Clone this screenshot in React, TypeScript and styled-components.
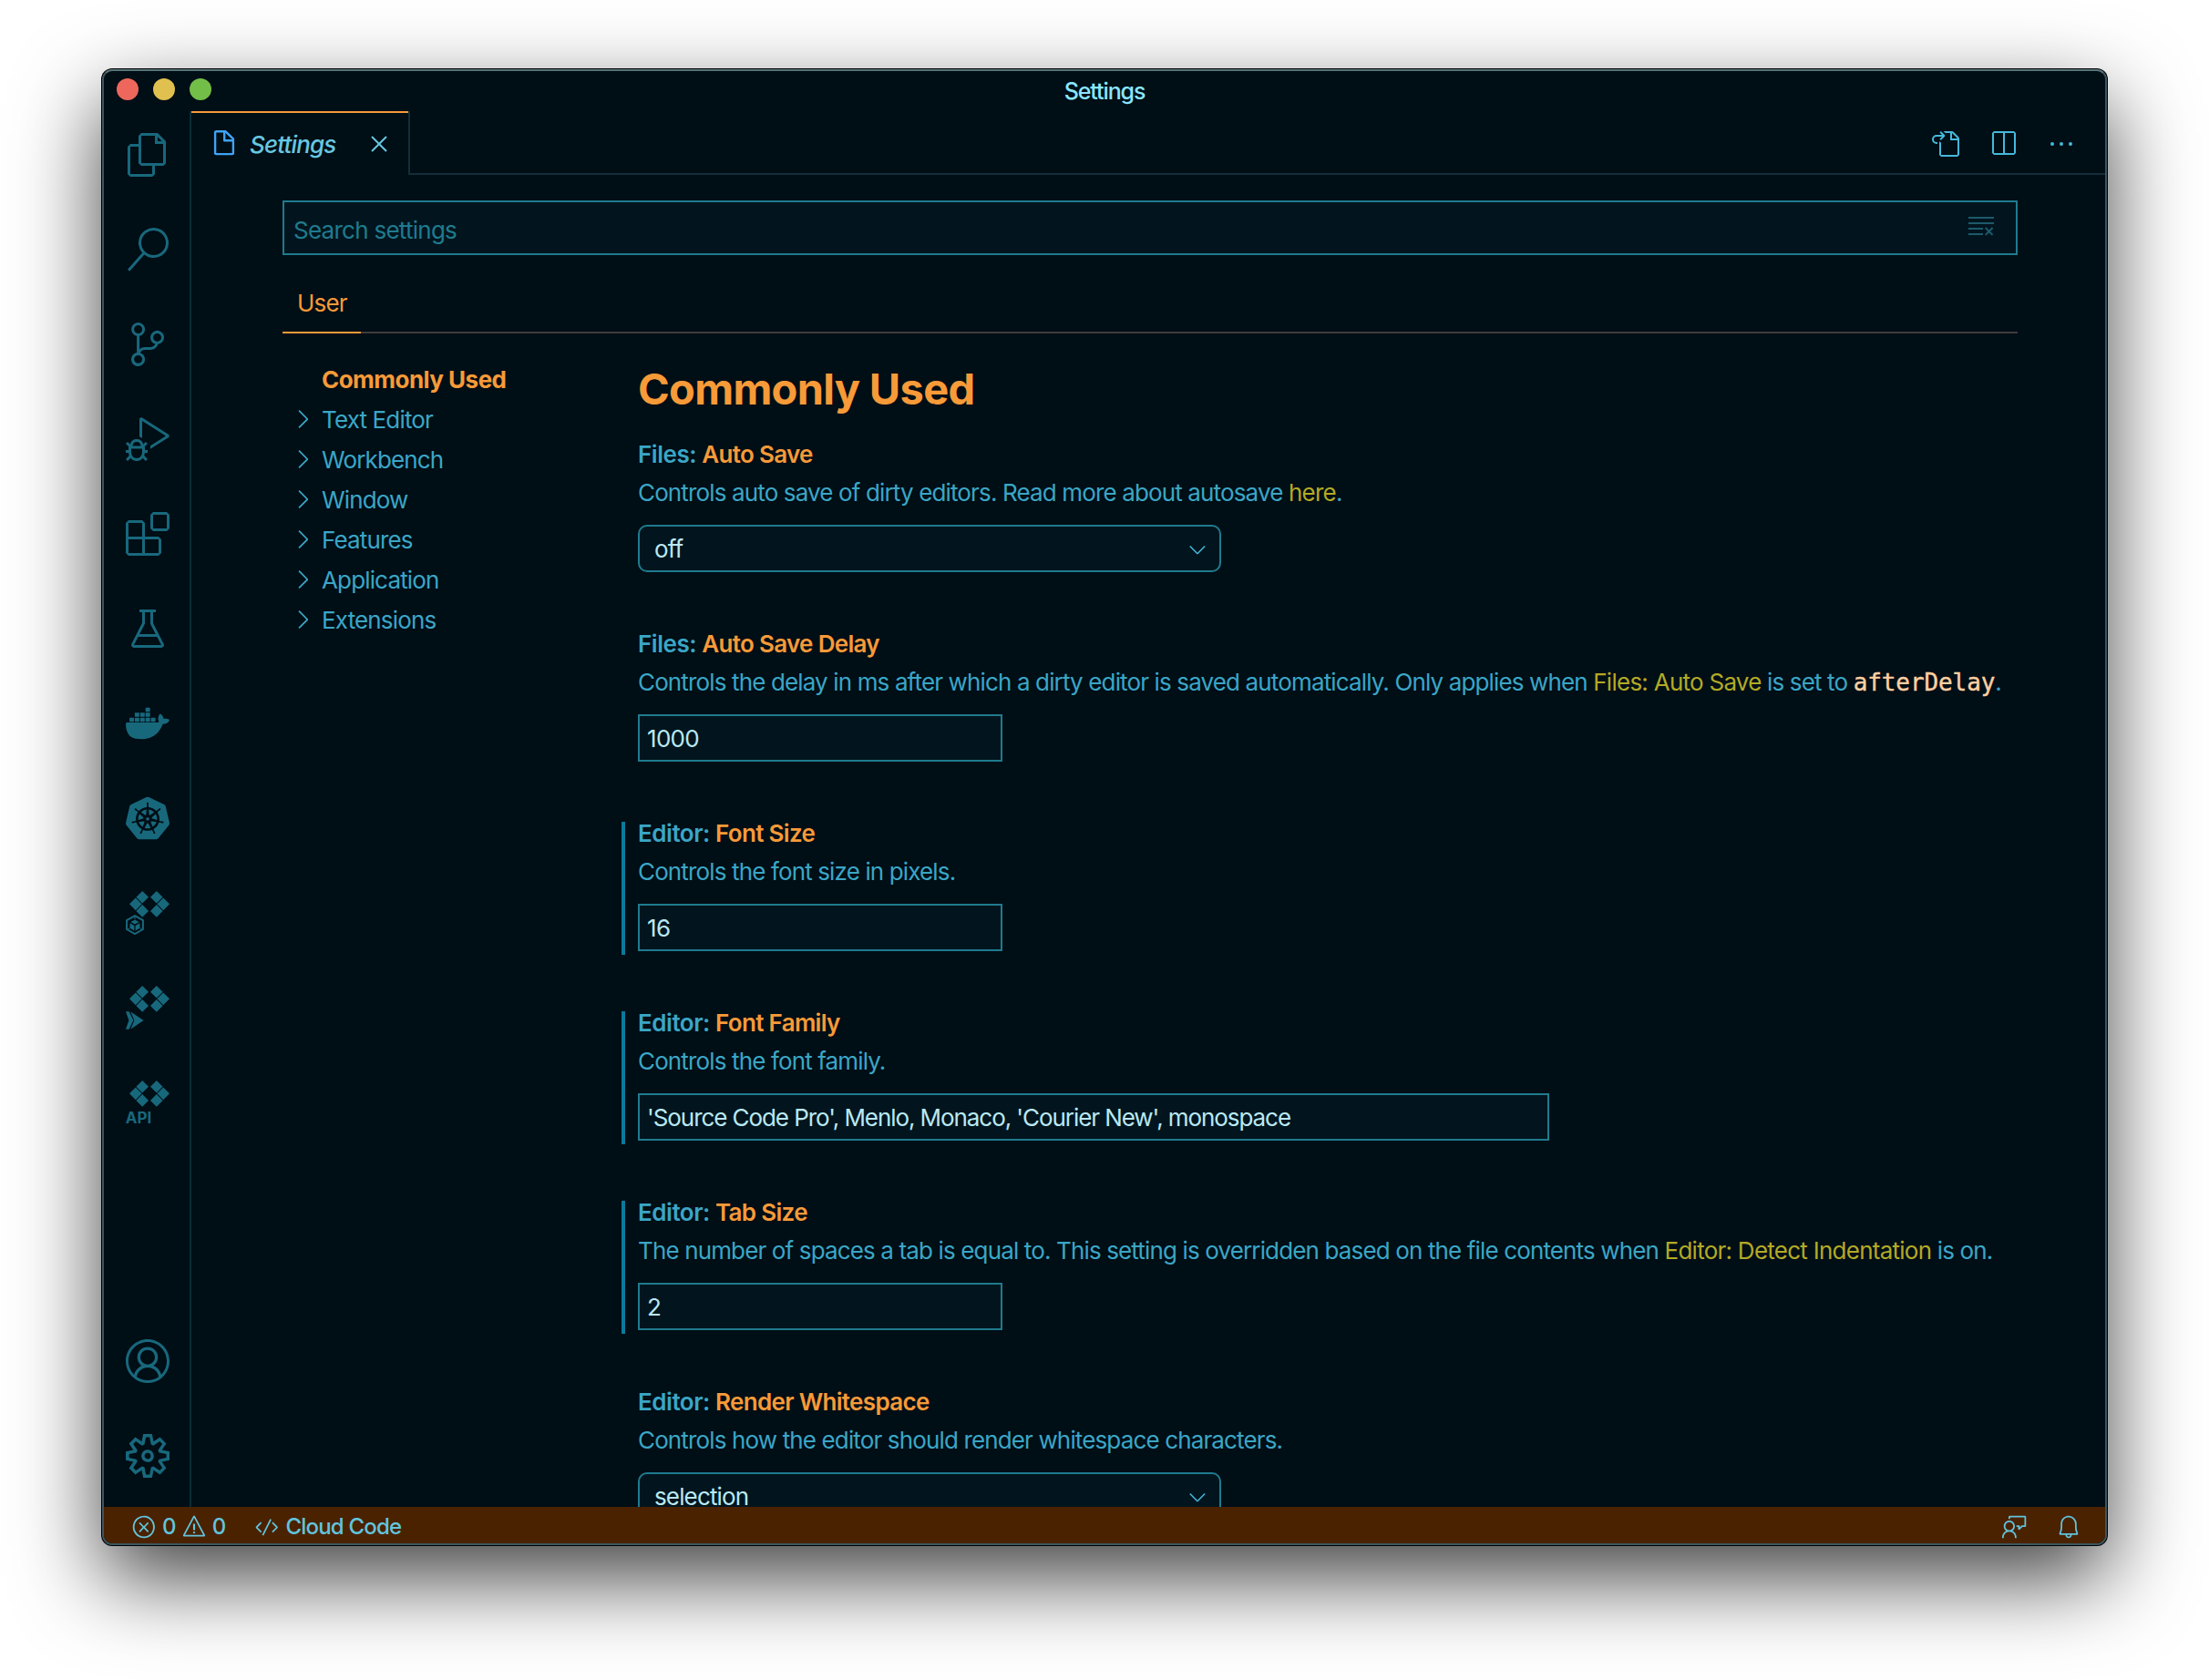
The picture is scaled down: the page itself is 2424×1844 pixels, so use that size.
import React from 'react';
import styled, { createGlobalStyle } from 'styled-components';
import {
  VscFiles, VscSearch, VscSourceControl, VscDebugAlt, VscExtensions, VscBeaker, VscAccount,
  VscSettingsGear, VscError, VscWarning, VscCode, VscFeedback, VscBell, VscGoToFile,
  VscSplitHorizontal, VscEllipsis, VscClearAll, VscClose, VscChevronRight, VscChevronDown,
} from 'react-icons/vsc';
import { SiDocker, SiKubernetes } from 'react-icons/si';

const color = {
  bg: '#000e16',
  field: '#02151e',
  fieldBorder: '#1f7b8e',
  line: '#122e39',
  sideLine: '#0c2c37',
  icon: '#18687c',
  text: '#3ba6c6',
  bright: '#b9e8f3',
  accent: '#f79a38',
  link: '#b3aa25',
  code: '#ffcfa0',
  action: '#45b9dc',
  status: '#4a2200',
  statusText: '#62c4de',
};

const GlobalStyle = createGlobalStyle`
  *, *::before, *::after { box-sizing: border-box; }
  body {
    margin: 0;
    background: #fff;
    color: ${color.text};
    font-family: Inter, "Liberation Sans", sans-serif;
    font-size: 26px;
    letter-spacing: -0.86px;
    -webkit-font-smoothing: antialiased;
  }
  svg { display: block; flex: none; overflow: visible; }
`;

const Desktop = styled.div`
  width: 2424px;
  height: 1844px;
  padding: 76px 112px 148px;
  overflow: hidden;
`;

const Window = styled.div`
  display: flex;
  flex-direction: column;
  height: 1620px;
  border: 2px solid #3c5660;
  border-top-color: #587579;
  border-radius: 11px;
  background: ${color.bg};
  box-shadow: 0 0 0 1px #000, 0 36px 94px rgba(0, 0, 0, 0.75);
  overflow: hidden;
`;

const TitleBar = styled.header`
  display: grid;
  grid-template-columns: 1fr auto 1fr;
  align-items: center;
  flex: none;
  height: 44px;
  padding: 0 14px;
`;

const Lights = styled.div`
  display: flex;
  gap: 16px;
  padding-bottom: 4px;
`;

const Light = styled.span<{ $fill: string }>`
  width: 24px;
  height: 24px;
  border-radius: 50%;
  background: ${p => p.$fill};
`;

const Title = styled.span`
  padding-bottom: 1px;
  color: #8ae6ff;
  font-size: 25px;
  font-weight: 500;
  letter-spacing: -1.1px;
`;

const Main = styled.div`
  display: flex;
  flex: 1;
  min-height: 0;
`;

const ActivityBar = styled.nav`
  display: flex;
  flex-direction: column;
  justify-content: space-between;
  flex: none;
  width: 96px;
  padding: 0 0 8px 2px;
  border-right: 2px solid ${color.sideLine};
  color: ${color.icon};
`;

const ActivityGroup = styled.div`
  display: flex;
  flex-direction: column;
  gap: 8px;
`;

const ActivityItem = styled.div`
  display: flex;
  align-items: center;
  justify-content: center;
  height: 96px;
`;

const Editor = styled.main`
  display: flex;
  flex-direction: column;
  flex: 1;
  min-width: 0;
`;

const TabStrip = styled.div`
  display: flex;
  flex: none;
  height: 70px;
`;

const Tab = styled.div`
  display: flex;
  align-items: center;
  width: 240px;
  padding: 0 18px 2px 23px;
  border-top: 2px solid ${color.accent};
  position: relative;
  &::after {
    content: '';
    position: absolute;
    top: -2px;
    right: 0;
    bottom: 0;
    width: 2px;
    background: ${color.line};
  }
`;

const TabLabel = styled.span`
  flex: 1;
  margin: 2px 0 0 15px;
  color: #67c7e0;
  font-style: italic;
  font-weight: 500;
  letter-spacing: -0.85px;
`;

const TabClose = styled.span`
  padding-top: 1px;
  color: #67c7e0;
`;

const TabActions = styled.div`
  display: flex;
  align-items: center;
  justify-content: flex-end;
  flex: 1;
  gap: 32px;
  padding: 4px 32px 0 0;
  border-bottom: 2px solid ${color.line};
  color: ${color.action};
`;

const Settings = styled.section`
  display: flex;
  flex-direction: column;
  flex: 1;
  min-height: 0;
  padding: 28px 96px 0 100px;
`;

const SearchBox = styled.div`
  display: flex;
  align-items: center;
  justify-content: space-between;
  flex: none;
  height: 60px;
  padding: 0 22px 0 10px;
  border: 2px solid ${color.fieldBorder};
  background: ${color.field};
  color: #1c5a6b;
`;

const Placeholder = styled.span`
  padding-top: 5px;
  color: ${color.fieldBorder};
  letter-spacing: -0.74px;
`;

const ClearIcon = styled.span`
  padding-bottom: 4px;
`;

const ScopeTabs = styled.div`
  display: flex;
  flex: none;
  height: 86px;
  align-items: flex-end;
  box-shadow: inset 0 -2px #403c3b;
`;

const ScopeTab = styled.div`
  width: 86px;
  height: 64px;
  padding-left: 16px;
  border-bottom: 2px solid ${color.accent};
  color: ${color.accent};
  line-height: 62px;
  letter-spacing: -0.8px;
`;

const Columns = styled.div`
  display: flex;
  flex: 1;
  min-height: 0;
`;

const Tree = styled.ul`
  flex: none;
  width: 372px;
  margin: 0;
  padding: 28px 0 0 6px;
  list-style: none;
`;

const TreeRow = styled.li<{ $active?: boolean }>`
  display: flex;
  align-items: center;
  height: 44px;
  gap: 5px;
  padding-left: ${p => (p.$active ? 37 : 0)}px;
  color: ${p => (p.$active ? color.accent : color.text)};
  font-weight: ${p => (p.$active ? 700 : 400)};
  letter-spacing: ${p => (p.$active ? -0.53 : -0.85)}px;
`;

const TreeChevron = styled.span``;

const SettingList = styled.div`
  flex: 1;
  min-width: 0;
  padding-top: 33px;
  overflow: hidden;
`;

const Heading = styled.h1`
  margin: 0 0 31px;
  padding-left: 18px;
  color: ${color.accent};
  font-size: 47px;
  font-weight: 700;
  line-height: 56px;
  letter-spacing: -0.7px;
`;

const Setting = styled.article<{ $modified?: boolean }>`
  height: 146px;
  margin-bottom: 62px;
  padding-left: 14px;
  border-left: 4px solid ${p => (p.$modified ? '#0a7a9c' : 'transparent')};
`;

const SettingTitle = styled.h2`
  margin: 0;
  font-size: 26px;
  font-weight: 600;
  line-height: 26px;
  letter-spacing: -0.46px;
  white-space: pre;
`;

const SettingName = styled.span`
  color: ${color.accent};
  letter-spacing: -0.68px;
`;

const Description = styled.p`
  margin: 0 0 7px;
  height: 57px;
  line-height: 57px;
  white-space: pre;
`;

const Link = styled.a`
  color: ${color.link};
  letter-spacing: -0.74px;
`;

const Code = styled.code`
  color: ${color.code};
  font: 26px/1 "DejaVu Sans Mono", monospace;
  letter-spacing: -0.1px;
  -webkit-text-stroke: 0.4px ${color.code};
`;

const TextField = styled.div<{ $width: number; $tight?: boolean }>`
  display: flex;
  align-items: center;
  width: ${p => p.$width}px;
  height: 52px;
  padding: 1px 8px 0;
  border: 2px solid ${color.fieldBorder};
  background: ${color.field};
  color: ${color.bright};
  letter-spacing: ${p => (p.$tight ? -1.07 : -0.7)}px;
  white-space: pre;
`;

const SelectField = styled.div`
  display: flex;
  align-items: center;
  justify-content: space-between;
  width: 640px;
  height: 52px;
  padding: 1px 10px 0 16px;
  border: 2px solid ${color.fieldBorder};
  border-radius: 10px;
  background: ${color.field};
  color: ${color.bright};
  svg { color: ${color.action}; }
`;

const StatusBar = styled.footer`
  display: flex;
  justify-content: space-between;
  flex: none;
  height: 40px;
  padding: 4px 26px 0 30px;
  background: ${color.status};
  color: ${color.statusText};
  font-size: 24px;
  font-weight: 500;
  letter-spacing: -0.8px;
`;

const StatusGroup = styled.div<{ $gap: number }>`
  display: flex;
  align-items: center;
  gap: ${p => p.$gap}px;
`;

const StatusItem = styled.div`
  display: flex;
  align-items: center;
  gap: 6px;
`;

const StatusText = styled.span`
  padding-bottom: 2px;
`;

const Diamonds = () => (
  <>
    {[[18.2, 6.8], [10.8, 14.35], [18.2, 21.9], [33.8, 6.8], [41.2, 14.35], [33.8, 21.9]].map(([x, y]) => (
      <path key={`${x}-${y}`} d={`M${x} ${y - 6.8}l6.8 6.8-6.8 6.8-6.8-6.8z`} />
    ))}
  </>
);

const CloudClusterIcon = () => (
  <svg width="48" height="48" viewBox="0 0 48 48" fill="currentColor">
    <Diamonds />
    <path d="M10 25l11 6.2v12L10 49.5-1 43.2v-12z" fill={color.bg} />
    <path d="M10 27.1l8.9 5v9.9L10 47 1.1 42v-9.9z" fill="none" stroke="currentColor" strokeWidth="2" />
    <path d="M10 31.6l4.6 2.5-4.6 2.5-4.6-2.5zM4.6 35.3l4.8 2.6v5.6l-4.8-2.7zM15.4 35.3l-4.8 2.6v5.6l4.8-2.7z" />
    <path d="M10 28v3M2 42.2l2.6-1.6M18 42.2l-2.6-1.6" stroke="currentColor" strokeWidth="1" />
  </svg>
);

const CloudRunIcon = () => (
  <svg width="48" height="48" viewBox="0 0 48 48" fill="currentColor">
    <Diamonds />
    <path d="M0 28.2h3.6L8.4 38l-4.8 9.8H0L3.4 38z" />
    <path d="M5.3 28.4L19.5 38 5.3 47.8 9.4 38z" />
  </svg>
);

const CloudApiIcon = () => (
  <svg width="48" height="48" viewBox="0 0 48 48" fill="currentColor">
    <Diamonds />
    <text x="-0.3" y="46.7" fontSize="17" fontWeight="700" letterSpacing="0" textLength="28.5">API</text>
  </svg>
);

const DocumentIcon = () => (
  <svg width="26" height="30" viewBox="0 0 26 30" fill="none" stroke="#3fa3f5" strokeWidth="2.4" strokeLinejoin="round">
    <path d="M4.4 2.2h9.9l8.6 8.2v15.4q0 1.3-1.3 1.3H4.4q-1.3 0-1.3-1.3V3.5q0-1.3 1.3-1.3z" />
    <path d="M13.2 2.4v9.9h9.5" />
  </svg>
);

const activities = [
  VscFiles, VscSearch, VscSourceControl, VscDebugAlt, VscExtensions, VscBeaker,
  SiDocker, SiKubernetes, CloudClusterIcon, CloudRunIcon, CloudApiIcon,
];

const sections = ['Text Editor', 'Workbench', 'Window', 'Features', 'Application', 'Extensions'];

interface SettingEntry {
  scope: string;
  name: string;
  description: React.ReactNode;
  value: string;
  modified?: boolean;
  width?: number;
}

const settings: SettingEntry[] = [
  {
    scope: 'Files',
    name: 'Auto Save',
    description: <>Controls auto save of dirty editors. Read more about autosave <Link>here</Link>.</>,
    value: 'off',
  },
  {
    scope: 'Files',
    name: 'Auto Save Delay',
    description: (
      <>
        Controls the delay in ms after which a dirty editor is saved automatically. Only applies when{' '}
        <Link>Files: Auto Save</Link> is set to <Code>afterDelay</Code>.
      </>
    ),
    value: '1000',
    width: 400,
  },
  { scope: 'Editor', name: 'Font Size', description: 'Controls the font size in pixels.', value: '16', width: 400, modified: true },
  {
    scope: 'Editor',
    name: 'Font Family',
    description: 'Controls the font family.',
    value: "'Source Code Pro', Menlo, Monaco, 'Courier New', monospace",
    width: 1000,
    modified: true,
  },
  {
    scope: 'Editor',
    name: 'Tab Size',
    description: (
      <>
        The number of spaces a tab is equal to. This setting is overridden based on the file contents when{' '}
        <Link>Editor: Detect Indentation</Link> is on.
      </>
    ),
    value: '2',
    width: 400,
    modified: true,
  },
  {
    scope: 'Editor',
    name: 'Render Whitespace',
    description: 'Controls how the editor should render whitespace characters.',
    value: 'selection',
  },
];

export default function App() {
  return (
    <Desktop>
      <GlobalStyle />
      <Window>
        <TitleBar>
          <Lights>
            <Light $fill="#ed675c" />
            <Light $fill="#e0c04e" />
            <Light $fill="#73be48" />
          </Lights>
          <Title>Settings</Title>
        </TitleBar>
        <Main>
          <ActivityBar>
            <ActivityGroup>
              {activities.map((Icon, i) => (
                <ActivityItem key={i}><Icon size={48} /></ActivityItem>
              ))}
            </ActivityGroup>
            <ActivityGroup>
              <ActivityItem><VscAccount size={48} /></ActivityItem>
              <ActivityItem><VscSettingsGear size={48} /></ActivityItem>
            </ActivityGroup>
          </ActivityBar>
          <Editor>
            <TabStrip>
              <Tab>
                <DocumentIcon />
                <TabLabel>Settings</TabLabel>
                <TabClose><VscClose size={32} /></TabClose>
              </Tab>
              <TabActions>
                <VscGoToFile size={32} />
                <VscSplitHorizontal size={32} />
                <VscEllipsis size={32} />
              </TabActions>
            </TabStrip>
            <Settings>
              <SearchBox>
                <Placeholder>Search settings</Placeholder>
                <ClearIcon><VscClearAll size={32} /></ClearIcon>
              </SearchBox>
              <ScopeTabs><ScopeTab>User</ScopeTab></ScopeTabs>
              <Columns>
                <Tree>
                  <TreeRow $active>Commonly Used</TreeRow>
                  {sections.map(name => (
                    <TreeRow key={name}>
                      <TreeChevron><VscChevronRight size={32} /></TreeChevron>
                      {name}
                    </TreeRow>
                  ))}
                </Tree>
                <SettingList>
                  <Heading>Commonly Used</Heading>
                  {settings.map(s => (
                    <Setting key={s.name} $modified={s.modified}>
                      <SettingTitle>{s.scope}: <SettingName>{s.name}</SettingName></SettingTitle>
                      <Description>{s.description}</Description>
                      {s.width ? (
                        <TextField $width={s.width} $tight={s.width > 400}>{s.value}</TextField>
                      ) : (
                        <SelectField>{s.value}<VscChevronDown size={28} /></SelectField>
                      )}
                    </Setting>
                  ))}
                </SettingList>
              </Columns>
            </Settings>
          </Editor>
        </Main>
        <StatusBar>
          <StatusGroup $gap={32}>
            <StatusItem>
              <VscError size={28} /><StatusText>0</StatusText>
              <VscWarning size={28} /><StatusText>0</StatusText>
            </StatusItem>
            <StatusItem><VscCode size={28} /><StatusText>Cloud Code</StatusText></StatusItem>
          </StatusGroup>
          <StatusGroup $gap={31}>
            <VscFeedback size={28} />
            <VscBell size={28} />
          </StatusGroup>
        </StatusBar>
      </Window>
    </Desktop>
  );
}
